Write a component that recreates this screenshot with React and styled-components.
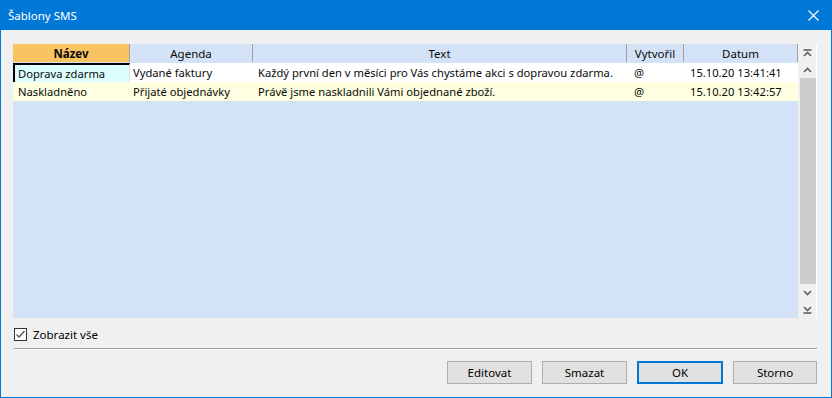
import React from "react";
import styled, { createGlobalStyle } from "styled-components";

const Global = createGlobalStyle`
  html, body { margin: 0; padding: 0; background: #f0f0f0; }
  body { font-family: "Noto Sans", sans-serif; font-size: 11.2px; color: #000; }
  * { box-sizing: border-box; }
`;

const Window = styled.div`
  width: 832px;
  height: 398px;
  display: flex;
  flex-direction: column;
  border: 1px solid #0078d7;
  border-top: none;
  background: #f0f0f0;
`;

const TitleBar = styled.div`
  height: 30px;
  flex: none;
  background: #0078d7;
  color: #fff;
  display: flex;
  align-items: center;
  justify-content: space-between;
  padding: 0 8px 0 8px;
  margin: 0 -1px;
  font-size: 11.5px;
`;

const CloseBtn = styled.div`
  width: 30px;
  height: 30px;
  display: flex;
  align-items: center;
  justify-content: center;
  margin-right: -4px;
`;

const Body = styled.div`
  flex: 1;
  display: flex;
  flex-direction: column;
  padding: 14px 14px 0 12px;
`;

const GridBox = styled.div`
  height: 274px;
  display: flex;
  background: #d3e2f7;
`;

const Table = styled.div`
  flex: 1;
  display: grid;
  grid-template-columns: 117px 123px 374px 57px 114px;
  grid-auto-rows: 19px;
  align-content: start;
`;

const HeadCell = styled.div`
  background: ${(p) => (p.$active ? "#f8c462" : "#d3e2f7")};
  font-weight: ${(p) => (p.$active ? 700 : 400)};
  border-right: 1px solid #a0a0a0;
  display: flex;
  align-items: center;
  justify-content: center;
  height: 18px;
  color: #0a0a0a;
  font-size: 11.5px;
  &:last-child { border-right: none; }
`;

const Cell = styled.div`
  background: ${(p) => p.$bg};
  padding-left: ${(p) => p.$pad}px;
  display: flex;
  align-items: center;
  white-space: nowrap;
  overflow: hidden;
  color: #0a0a0a;
  ${(p) =>
    p.$focus &&
    `
    border-top: 2px solid #000;
    border-left: 2px solid #000;
    border-right: 1px solid #e0e0e0;
    padding-left: ${p.$pad - 2}px;
  `}
`;

const ScrollBar = styled.div`
  width: 19px;
  flex: none;
  background: #f0f0f0;
  border-left: 1px solid #f0f0f0;
  border-right: 1px solid #ffffff;
  display: flex;
  flex-direction: column;
  align-items: center;
`;

const ArrowBtn = styled.div`
  width: 17px;
  height: 17px;
  flex: none;
  display: flex;
  align-items: center;
  justify-content: center;
`;

const Track = styled.div`
  flex: 1;
  width: 17px;
  display: flex;
  flex-direction: column;
`;

const Thumb = styled.div`
  width: 16px;
  margin-left: 1px;
  flex: 1;
  background: #cdcdcd;
`;

const CheckRow = styled.label`
  display: flex;
  align-items: center;
  gap: 6px;
  margin-top: 10px;
  height: 13px;
  padding-left: 1px;
  font-size: 11.5px;
`;

const CheckBox = styled.span`
  width: 13px;
  height: 13px;
  border: 1px solid #333;
  background: #fff;
  display: flex;
  align-items: center;
  justify-content: center;
`;

const Separator = styled.div`
  margin-top: 7px;
  margin-left: 1px;
  height: 2px;
  border-top: 1px solid #a0a0a0;
  border-bottom: 1px solid #ffffff;
`;

const ButtonRow = styled.div`
  display: flex;
  justify-content: flex-end;
  gap: 10px;
  margin-top: 11px;
`;

const Button = styled.div`
  width: ${(p) => p.$w || 85}px;
  height: 23px;
  background: #e1e1e1;
  border: ${(p) => (p.$default ? "2px solid #0078d7" : "1px solid #adadad")};
  display: flex;
  align-items: center;
  justify-content: center;
  color: #000;
  font-size: 11.5px;
`;

const Chevron = ({ dir = "up", dbl = false }) => (
  <svg width="9" height="8" viewBox="0 0 9 8">
    <g
      transform={dir === "down" ? "rotate(180 4.5 4)" : undefined}
      stroke="#606060"
      strokeWidth="1.6"
      fill="none"
    >
      {dbl && <line x1="0.5" y1="1" x2="8.5" y2="1" />}
      <polyline points={dbl ? "1,7 4.5,3.5 8,7" : "1,6 4.5,2.5 8,6"} />
    </g>
  </svg>
);

const columns = [
  { title: "Název", active: true },
  { title: "Agenda" },
  { title: "Text" },
  { title: "Vytvořil" },
  { title: "Datum" },
];

const rows = [
  {
    bg: "#ffffff",
    cells: [
      "Doprava zdarma",
      "Vydané faktury",
      "Každý první den v měsíci pro Vás chystáme akci s dopravou zdarma.",
      "@",
      "15.10.20 13:41:41",
    ],
    focus: true,
  },
  {
    bg: "#fefee1",
    cells: [
      "Naskladněno",
      "Přijaté objednávky",
      "Právě jsme naskladnili Vámi objednané zboží.",
      "@",
      "15.10.20 13:42:57",
    ],
  },
];

const pads = [5, 3, 5, 7, 6];

export default function App() {
  return (
    <>
      <Global />
      <Window>
        <TitleBar>
          <span>Šablony SMS</span>
          <CloseBtn>
            <svg width="11" height="11" viewBox="0 0 11 11">
              <path d="M0.5 0.5 L10.5 10.5 M10.5 0.5 L0.5 10.5" stroke="#fff" strokeWidth="1.1" />
            </svg>
          </CloseBtn>
        </TitleBar>
        <Body>
          <GridBox>
            <Table>
              {columns.map((c) => (
                <HeadCell key={c.title} $active={c.active}>
                  {c.title}
                </HeadCell>
              ))}
              {rows.map((r, ri) =>
                r.cells.map((t, ci) => (
                  <Cell
                    key={ri + "-" + ci}
                    $bg={r.focus && ci === 0 ? "#dcfeff" : r.bg}
                    $pad={pads[ci]}
                    $focus={r.focus && ci === 0}
                  >
                    {t}
                  </Cell>
                ))
              )}
            </Table>
            <ScrollBar>
              <ArrowBtn><Chevron dbl /></ArrowBtn>
              <ArrowBtn><Chevron /></ArrowBtn>
              <Track>
                <Thumb />
              </Track>
              <ArrowBtn><Chevron dir="down" /></ArrowBtn>
              <ArrowBtn><Chevron dir="down" dbl /></ArrowBtn>
            </ScrollBar>
          </GridBox>
          <CheckRow>
            <CheckBox>
              <svg width="11" height="11" viewBox="0 0 11 11">
                <polyline points="1.5,5.5 4,8 9.5,2" fill="none" stroke="#555" strokeWidth="1.3" />
              </svg>
            </CheckBox>
            <span>Zobrazit vše</span>
          </CheckRow>
          <Separator />
          <ButtonRow>
            <Button>Editovat</Button>
            <Button>Smazat</Button>
            <Button $default $w={86}>OK</Button>
            <Button $w={84}>Storno</Button>
          </ButtonRow>
        </Body>
      </Window>
    </>
  );
}
